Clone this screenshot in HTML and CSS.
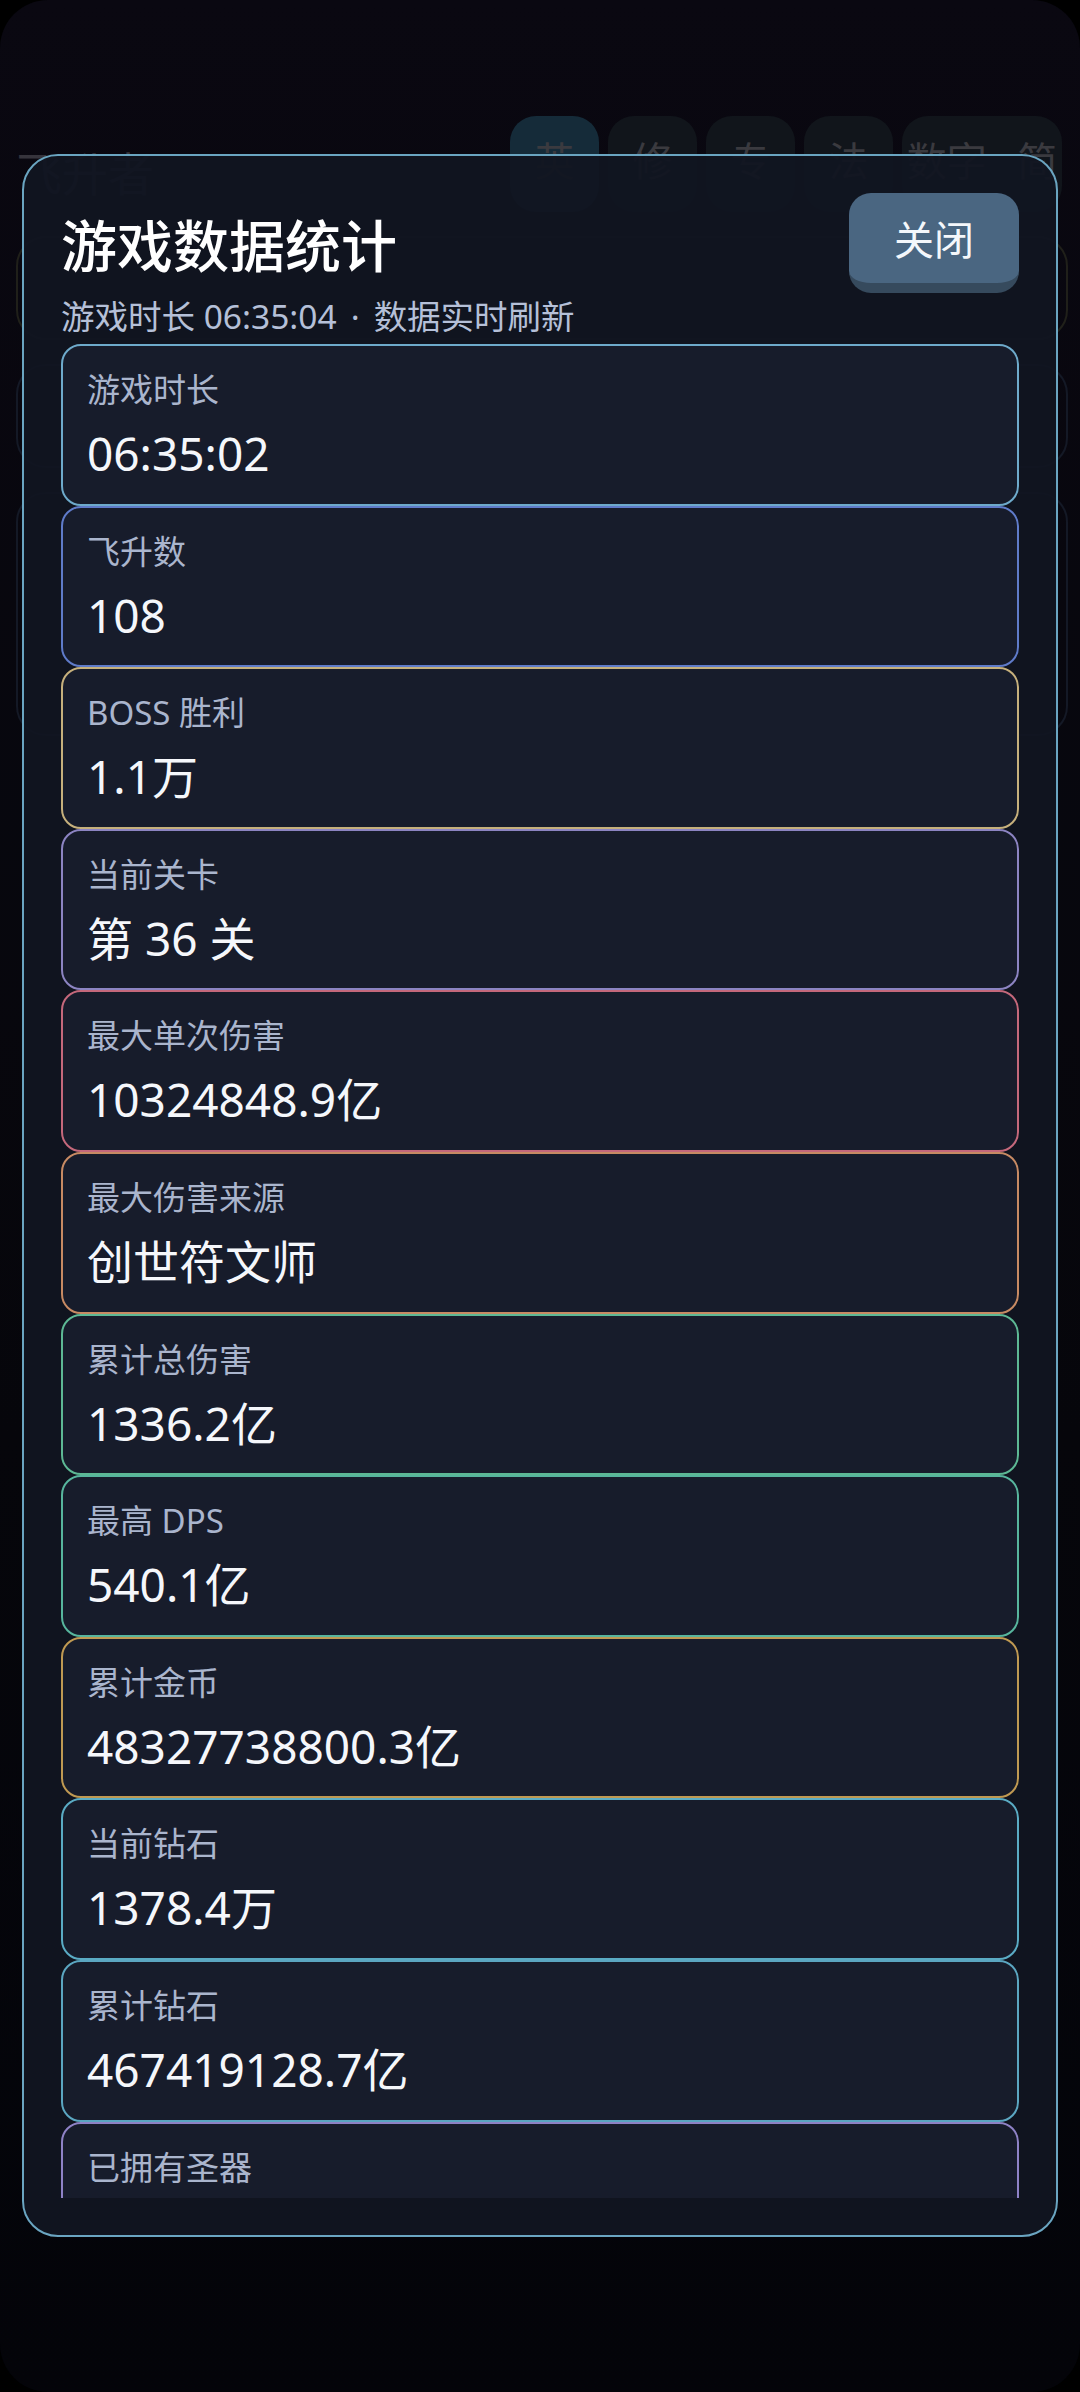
FILE: index.html
```html
<!DOCTYPE html>
<html lang="zh-CN">
<head>
  <meta charset="UTF-8">
  <title>飞升者 - 游戏数据统计</title>
  <link rel="stylesheet" href="styles.css">
</head>
<body>
  <div class="screen">
    <!-- juego de fondo, tapado por el modal -->
    <div class="app">
      <div class="app-top">
        <div class="app-name">飞升者</div>
        <div class="tabs">
          <span class="tab active">英</span>
          <span class="tab">修</span>
          <span class="tab">专</span>
          <span class="tab">法</span>
          <span class="tab wide">数字 简</span>
        </div>
      </div>
      <div class="bg-panel gold"></div>
      <div class="bg-panel"></div>
      <div class="bg-panel tall"></div>
    </div>

    <div class="overlay">
      <div class="modal">
        <div class="modal-head">
          <h1>游戏数据统计</h1>
          <button class="btn-close">关闭</button>
        </div>
        <div class="modal-sub">游戏时长 06:35:04<span class="dot">·</span>数据实时刷新</div>

        <div class="stat-list">
          <div class="stat c-sky">
            <div class="stat-label">游戏时长</div>
            <div class="stat-value">06:35:02</div>
          </div>
          <div class="stat c-indigo">
            <div class="stat-label">飞升数</div>
            <div class="stat-value">108</div>
          </div>
          <div class="stat c-sand">
            <div class="stat-label">BOSS 胜利</div>
            <div class="stat-value">1.1万</div>
          </div>
          <div class="stat c-lilac">
            <div class="stat-label">当前关卡</div>
            <div class="stat-value">第 36 关</div>
          </div>
          <div class="stat c-rose">
            <div class="stat-label">最大单次伤害</div>
            <div class="stat-value">10324848.9亿</div>
          </div>
          <div class="stat c-peach">
            <div class="stat-label">最大伤害来源</div>
            <div class="stat-value">创世符文师</div>
          </div>
          <div class="stat c-mint">
            <div class="stat-label">累计总伤害</div>
            <div class="stat-value">1336.2亿</div>
          </div>
          <div class="stat c-teal">
            <div class="stat-label">最高 DPS</div>
            <div class="stat-value">540.1亿</div>
          </div>
          <div class="stat c-gold">
            <div class="stat-label">累计金币</div>
            <div class="stat-value">48327738800.3亿</div>
          </div>
          <div class="stat c-cyan">
            <div class="stat-label">当前钻石</div>
            <div class="stat-value">1378.4万</div>
          </div>
          <div class="stat c-sky2">
            <div class="stat-label">累计钻石</div>
            <div class="stat-value">467419128.7亿</div>
          </div>
          <div class="stat c-lilac2">
            <div class="stat-label">已拥有圣器</div>
            <div class="stat-value">24 件</div>
          </div>
        </div>
      </div>
    </div>
  </div>
</body>
</html>
```

FILE: styles.css
```css
html, body {
  margin: 0;
  background: #000;
}
body {
  font-family: "Noto Sans", "Noto Sans CJK SC", sans-serif;
}
.screen {
  position: relative;
  width: 1080px;
  height: 2392px;
  border-radius: 48px;
  overflow: hidden;
  background: linear-gradient(#0c0a14, #07070d 60%, #04050a);
}

/* fondo */
.app {
  padding: 116px 12px 0 16px;
}
.app-top {
  display: flex;
  justify-content: space-between;
  align-items: flex-start;
}
.app-name {
  font-size: 46px;
  color: #47444e;
  margin-top: 22px;
  font-family: "Noto Sans CJK SC", sans-serif;
}
.tabs {
  display: flex;
  gap: 9px;
  margin-right: 6px;
}
.tab {
  width: 89px;
  height: 96px;
  border-radius: 26px;
  background: #161b22;
  color: #4d4c52;
  font-size: 40px;
  text-align: center;
  padding-top: 14px;
  box-sizing: border-box;
}
.tab.active {
  background: #1b384a;
}
.tab.wide {
  width: 160px;
  word-spacing: 20px;
}
.bg-panel {
  margin-top: 24px;
  height: 100px;
  border: 2px solid #1a2030;
  border-radius: 30px;
}
.bg-panel.gold {
  border-color: #2a2a20;
}
.bg-panel.tall {
  height: 240px;
}

/* modal */
.overlay {
  position: absolute;
  inset: 0;
  background: rgba(3, 4, 8, 0.25);
}
.modal {
  position: absolute;
  top: 154px;
  left: 22px;
  right: 22px;
  bottom: 155px;
  box-sizing: border-box;
  border: 2px solid #6aa5c1;
  border-radius: 36px;
  background: rgba(17, 21, 33, 0.95);
  padding: 37px;
  display: flex;
  flex-direction: column;
}
.modal-head {
  display: flex;
  justify-content: space-between;
  align-items: center;
}
.modal-head h1 {
  margin: 0;
  font-size: 56px;
  font-weight: 500;
  color: #fff;
  line-height: 1.2;
  font-family: "Noto Sans CJK SC", sans-serif;
}
.btn-close {
  width: 170px;
  height: 100px;
  border: none;
  border-bottom: 10px solid #364a5d;
  border-radius: 22px;
  background: #4a6681;
  color: #f4f7fb;
  font-size: 40px;
  font-family: "Noto Sans CJK SC", sans-serif;
  padding: 0;
  cursor: pointer;
}
.modal-sub {
  margin-top: 2px;
  font-size: 33.5px;
  line-height: 42px;
  color: #b5c0d8;
}
.modal-sub .dot {
  margin: 0 14px;
}

.stat-list {
  flex: 1;
  min-height: 0;
  overflow: hidden;
  margin-top: 7px;
  display: flex;
  flex-direction: column;
}
.stat {
  flex-shrink: 0;
  border: 2px solid #6aa6cc;
  border-radius: 20px;
  background: #171c2b;
  padding: 23px 24px 18.6px;
}
.stat-label {
  font-size: 33px;
  line-height: 42px;
  color: #aab5cd;
}
.stat-value {
  margin-top: 10px;
  font-size: 46px;
  line-height: 64px;
  color: #f5f7fb;
}

.c-sky { border-color: #6eaacb; }
.c-indigo { border-color: #5f7bc9; }
.c-sand { border-color: #c6b07c; }
.c-lilac { border-color: #8c84c2; }
.c-rose { border-color: #c4687b; }
.c-peach { border-color: #c78a63; }
.c-mint { border-color: #5db894; }
.c-teal { border-color: #57b59d; }
.c-gold { border-color: #bf9952; }
.c-cyan { border-color: #5aabc4; }
.c-sky2 { border-color: #5ba6c1; }
.c-lilac2 { border-color: #8e82c6; }
```
